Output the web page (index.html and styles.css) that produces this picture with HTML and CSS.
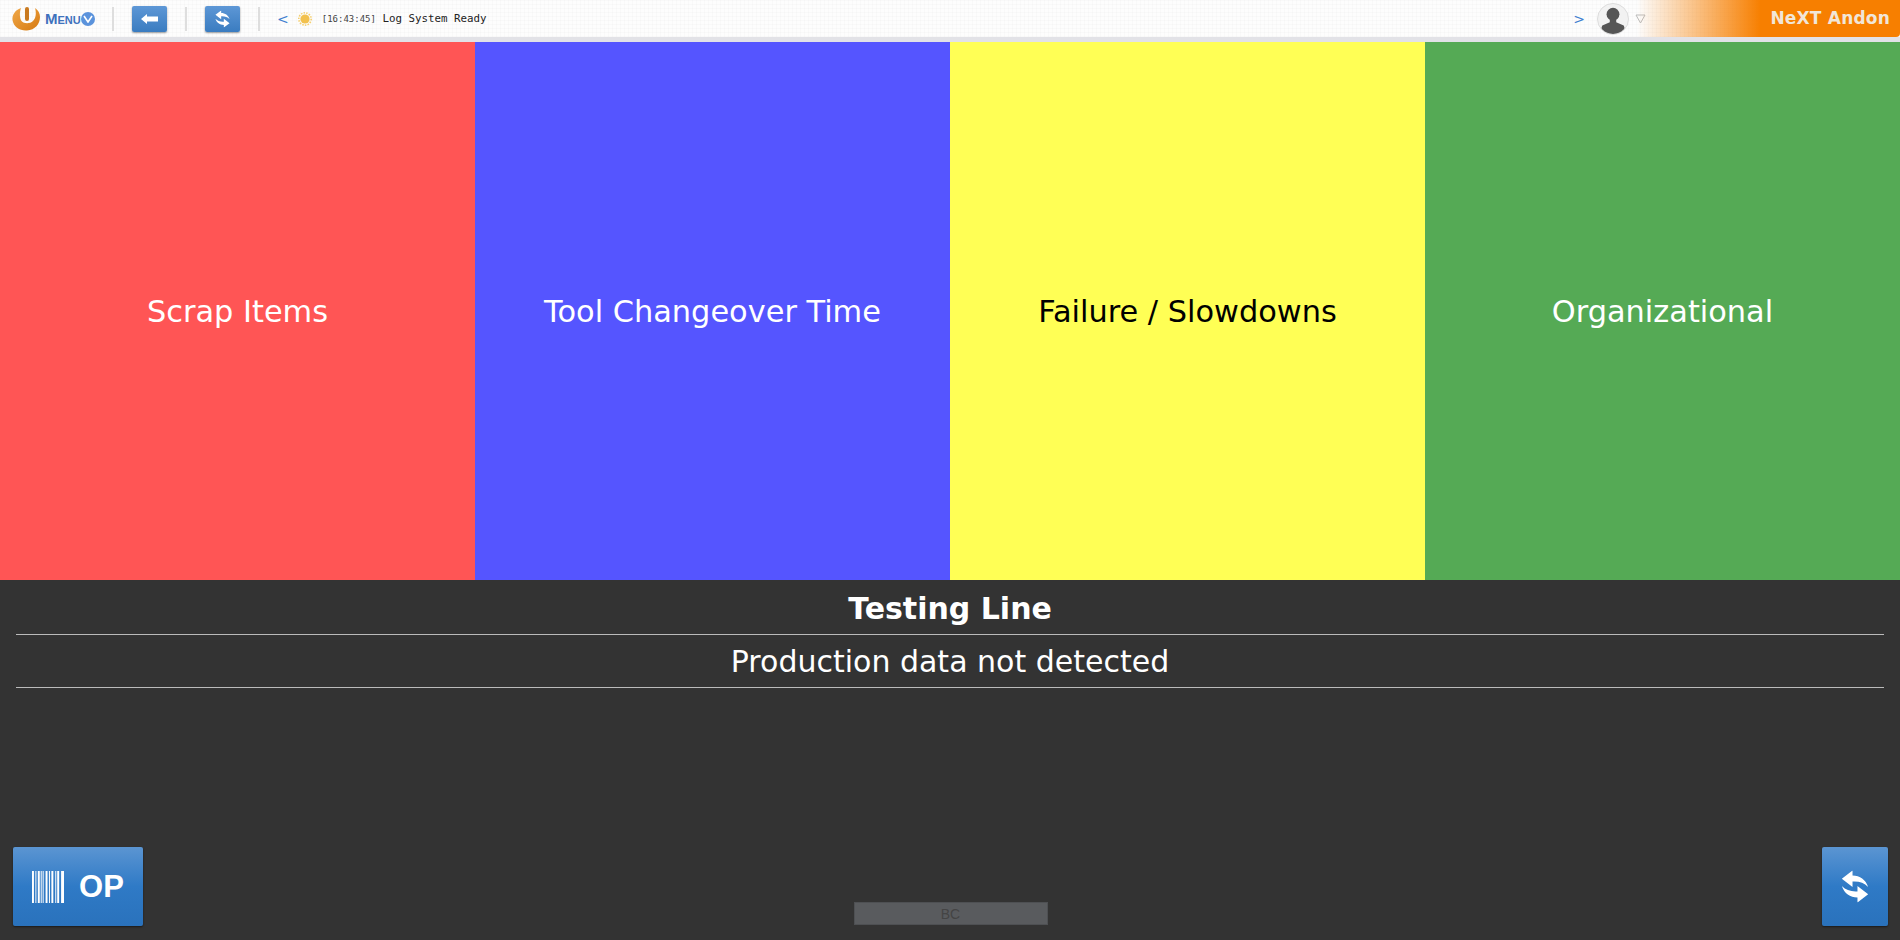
FILE: index.html
```html
<!DOCTYPE html>
<html lang="en">

<head>
    <meta charset="UTF-8">
    <title>NeXT Andon</title>
    <link rel="stylesheet" href="styles.css">
</head>

<body>
    <header class="topbar">
        <div class="menu">
            <svg class="logo" width="28" height="25" viewBox="0 0 28 25">
                <defs>
                    <linearGradient id="logoFill" x1="0" y1="0" x2="1" y2="1">
                        <stop offset="0" stop-color="#f0a848" />
                        <stop offset="1" stop-color="#d67a12" />
                    </linearGradient>
                </defs>
                <path d="M9 2 C3 4 0 9 0.5 14 C1.5 21 8 25 15 24.5 C23 24 28 18 28 11 C28 7 26 4 23 2 C24.5 7 24 12 21 15 C18 18 12 18 9.5 15 C7.5 12 7.5 6 9 2 Z" fill="url(#logoFill)" />
                <rect x="13" y="1" width="4" height="14" rx="2" fill="#c97a20" />
            </svg>
            <span class="menu-label">Menu</span>
            <span class="menu-arrow">
                <svg width="10" height="8" viewBox="0 0 10 8"><path d="M1 1 L5 7 L9 1" fill="none" stroke="#fff" stroke-width="1.6" /></svg>
            </span>
        </div>
        <div class="sep"></div>
        <button class="tool-btn">
            <svg width="17" height="10" viewBox="0 0 17 10"><path d="M0 5 L6 0 V2.5 H17 V7.5 H6 V10 Z" fill="#fff" /></svg>
        </button>
        <div class="sep"></div>
        <button class="tool-btn">
            <svg width="15" height="18" viewBox="0 0 34 39"><use href="#sync" /></svg>
        </button>
        <div class="sep"></div>
        <span class="nav-arrow">&lt;</span>
        <svg class="sun" width="14" height="14" viewBox="0 0 14 14">
            <circle cx="7" cy="7" r="4.6" fill="#f2c14e" />
            <circle cx="7" cy="7" r="6.2" fill="none" stroke="#f5cf6e" stroke-width="1.6" stroke-dasharray="1.5 1.2" />
        </svg>
        <span class="log"><span class="log-time">[16:43:45]</span> Log System Ready</span>
        <div class="spacer"></div>
        <span class="nav-arrow">&gt;</span>
        <div class="avatar">
            <svg width="30" height="30" viewBox="0 0 28 28">
                <circle cx="14" cy="9.5" r="6" fill="#555" />
                <path d="M11 14 H17 V17 L24 20 C25 22 25 24 25 28 H3 C3 24 3 22 4 20 L11 17 Z" fill="#555" />
            </svg>
        </div>
        <svg class="caret" width="11" height="10" viewBox="0 0 11 10"><path d="M1 1 H10 L5.5 9 Z" fill="none" stroke="#bbb" /></svg>
        <div class="brand">NeXT Andon</div>
    </header>

    <main class="tiles">
        <div class="tile tile-red">Scrap Items</div>
        <div class="tile tile-blue">Tool Changeover Time</div>
        <div class="tile tile-yellow">Failure / Slowdowns</div>
        <div class="tile tile-green">Organizational</div>
    </main>

    <section class="panel">
        <h1 class="line-name">Testing Line</h1>
        <p class="line-status">Production data not detected</p>
        <div class="panel-foot">
            <button class="big-btn op-btn">
                <svg width="32" height="32" viewBox="0 0 33 33" fill="#fff">
                    <rect x="0" width="2" height="33" />
                    <rect x="3.5" width="1" height="33" />
                    <rect x="6" width="2" height="33" />
                    <rect x="9" width="1" height="33" />
                    <rect x="11" width="1" height="33" />
                    <rect x="14" width="2" height="33" />
                    <rect x="17.5" width="1" height="33" />
                    <rect x="20" width="2" height="33" />
                    <rect x="24" width="1" height="33" />
                    <rect x="26" width="2" height="33" />
                    <rect x="30" width="3" height="33" />
                </svg>
                <span>OP</span>
            </button>
            <input class="code-input" type="text" placeholder="BC" autofocus>
            <button class="big-btn sync-btn">
                <svg width="28" height="33" viewBox="0 0 34 39"><use href="#sync" /></svg>
            </button>
        </div>
    </section>

    <svg width="0" height="0" class="defs">
        <symbol id="sync" viewBox="0 0 34 39">
            <path d="M1 10 L14 0 V6 C23 6 30 11 33 20 C28 15 22 13 14 13.5 V20 Z" fill="#fff" />
            <path d="M33 29 L20 39 V33 C11 33 4 28 1 19 C6 24 12 26 20 25.5 V19 Z" fill="#fff" />
        </symbol>
    </svg>
</body>

</html>
```

FILE: styles.css
```css
html,
body {
    height: 100%;
}

body {
    margin: 0;
    display: flex;
    flex-direction: column;
    font-family: "DejaVu Sans", Verdana, sans-serif;
    background-color: #333;
    overflow: hidden;
}

.defs {
    position: absolute;
}

/* top bar */
.topbar {
    height: 37px;
    flex: none;
    display: flex;
    align-items: center;
    padding-left: 12px;
    background-color: #fdfdfd;
    background-image:
        linear-gradient(rgba(0, 0, 0, 0.015) 1px, transparent 1px),
        linear-gradient(90deg, rgba(0, 0, 0, 0.015) 1px, transparent 1px);
    background-size: 4px 4px;
    border-bottom: 5px solid #e2e2e7;
}

.menu {
    display: flex;
    align-items: center;
    width: 100px;
}

.logo {
    margin-right: 5px;
}

.menu-label {
    font-family: "Liberation Sans", Arial, sans-serif;
    font-size: 15px;
    font-weight: bold;
    font-variant: small-caps;
    color: #3f72bd;
}

.menu-arrow {
    width: 14px;
    height: 14px;
    display: flex;
    align-items: center;
    justify-content: center;
    border-radius: 50%;
    background-color: #5b93dc;
}

.sep {
    width: 2px;
    height: 24px;
    background-color: #dedede;
}

.tool-btn {
    width: 35px;
    height: 26px;
    margin: 0 18px;
    padding: 0;
    display: flex;
    align-items: center;
    justify-content: center;
    border: none;
    border-radius: 2px;
    background: linear-gradient(#5d97d6, #3a7cc0);
    box-shadow: 0 1px 2px rgba(0, 0, 0, 0.4);
}

.nav-arrow {
    font-family: "DejaVu Sans", sans-serif;
    font-size: 14px;
    color: #3f7fd0;
}

.sep + .nav-arrow {
    margin-left: 17px;
}

.sun {
    margin-left: 9px;
}

.log {
    margin-left: 10px;
    font-family: "DejaVu Sans Mono", monospace;
    font-size: 10.8px;
    color: #222;
}

.log-time {
    font-size: 9px;
    color: #444;
}

.spacer {
    flex: 1;
}

.avatar {
    width: 30px;
    height: 30px;
    flex: none;
    margin-left: 12px;
    display: flex;
    align-items: center;
    justify-content: center;
    overflow: hidden;
    border-radius: 50%;
    background-color: #f2f2f2;
    border: 1px solid #ddd;
}

.caret {
    flex: none;
    margin-left: 6px;
}

.brand {
    width: 263px;
    height: 37px;
    flex: none;
    margin-left: -9px;
    padding-right: 10px;
    box-sizing: border-box;
    text-align: right;
    line-height: 37px;
    font-size: 17px;
    font-weight: bold;
    letter-spacing: 0.2px;
    color: #f1e6d8;
    background: linear-gradient(to right, rgba(247, 127, 0, 0) 0, #f77f00 47%);
    border-bottom-right-radius: 4px;
}

/* category tiles */
.tiles {
    height: 538px;
    flex: none;
    display: grid;
    grid-template-columns: repeat(4, 1fr);
}

.tile {
    display: flex;
    align-items: center;
    justify-content: center;
    font-size: 30.4px;
    color: #fff;
}

.tile-red {
    background-color: #ff5555;
}

.tile-blue {
    background-color: #5555ff;
}

.tile-yellow {
    background-color: #ffff55;
    color: #000;
}

.tile-green {
    background-color: #55aa55;
}

/* line info */
.panel {
    flex: 1;
    display: flex;
    flex-direction: column;
    padding: 0 16px;
    background-color: #333;
    color: #fff;
    text-align: center;
}

.line-name {
    margin: 0;
    height: 54px;
    line-height: 58px;
    font-size: 30px;
    font-weight: bold;
    border-bottom: 1px solid #bbb;
}

.line-status {
    margin: 0;
    height: 52px;
    line-height: 53px;
    font-size: 30px;
    border-bottom: 1px solid #bbb;
}

.panel-foot {
    flex: 1;
    display: grid;
    grid-template-columns: 1fr auto 1fr;
    align-items: end;
    margin: 0 -4px 0 -3px;
    padding-bottom: 14px;
}

.big-btn {
    height: 79px;
    padding: 0;
    display: flex;
    align-items: center;
    justify-content: center;
    border: none;
    border-radius: 2px;
    color: #fff;
    background: linear-gradient(#5b95d2, #2f7ac6 50%, #2a72bc);
    box-shadow: 0 1px 2px rgba(0, 0, 0, 0.5);
}

.op-btn {
    width: 130px;
    gap: 15px;
    font-family: "Liberation Sans", Arial, sans-serif;
    font-size: 31px;
    font-weight: bold;
}

.sync-btn {
    width: 66px;
    justify-self: end;
}

.code-input {
    width: 194px;
    height: 23px;
    margin-bottom: 1px;
    padding: 0;
    box-sizing: border-box;
    text-align: center;
    font-size: 14px;
    color: #333;
    caret-color: #222;
    background-color: #595b5e;
    border: 1px solid #4e5053;
    outline: none;
}

.code-input::placeholder {
    color: #444;
}
```
